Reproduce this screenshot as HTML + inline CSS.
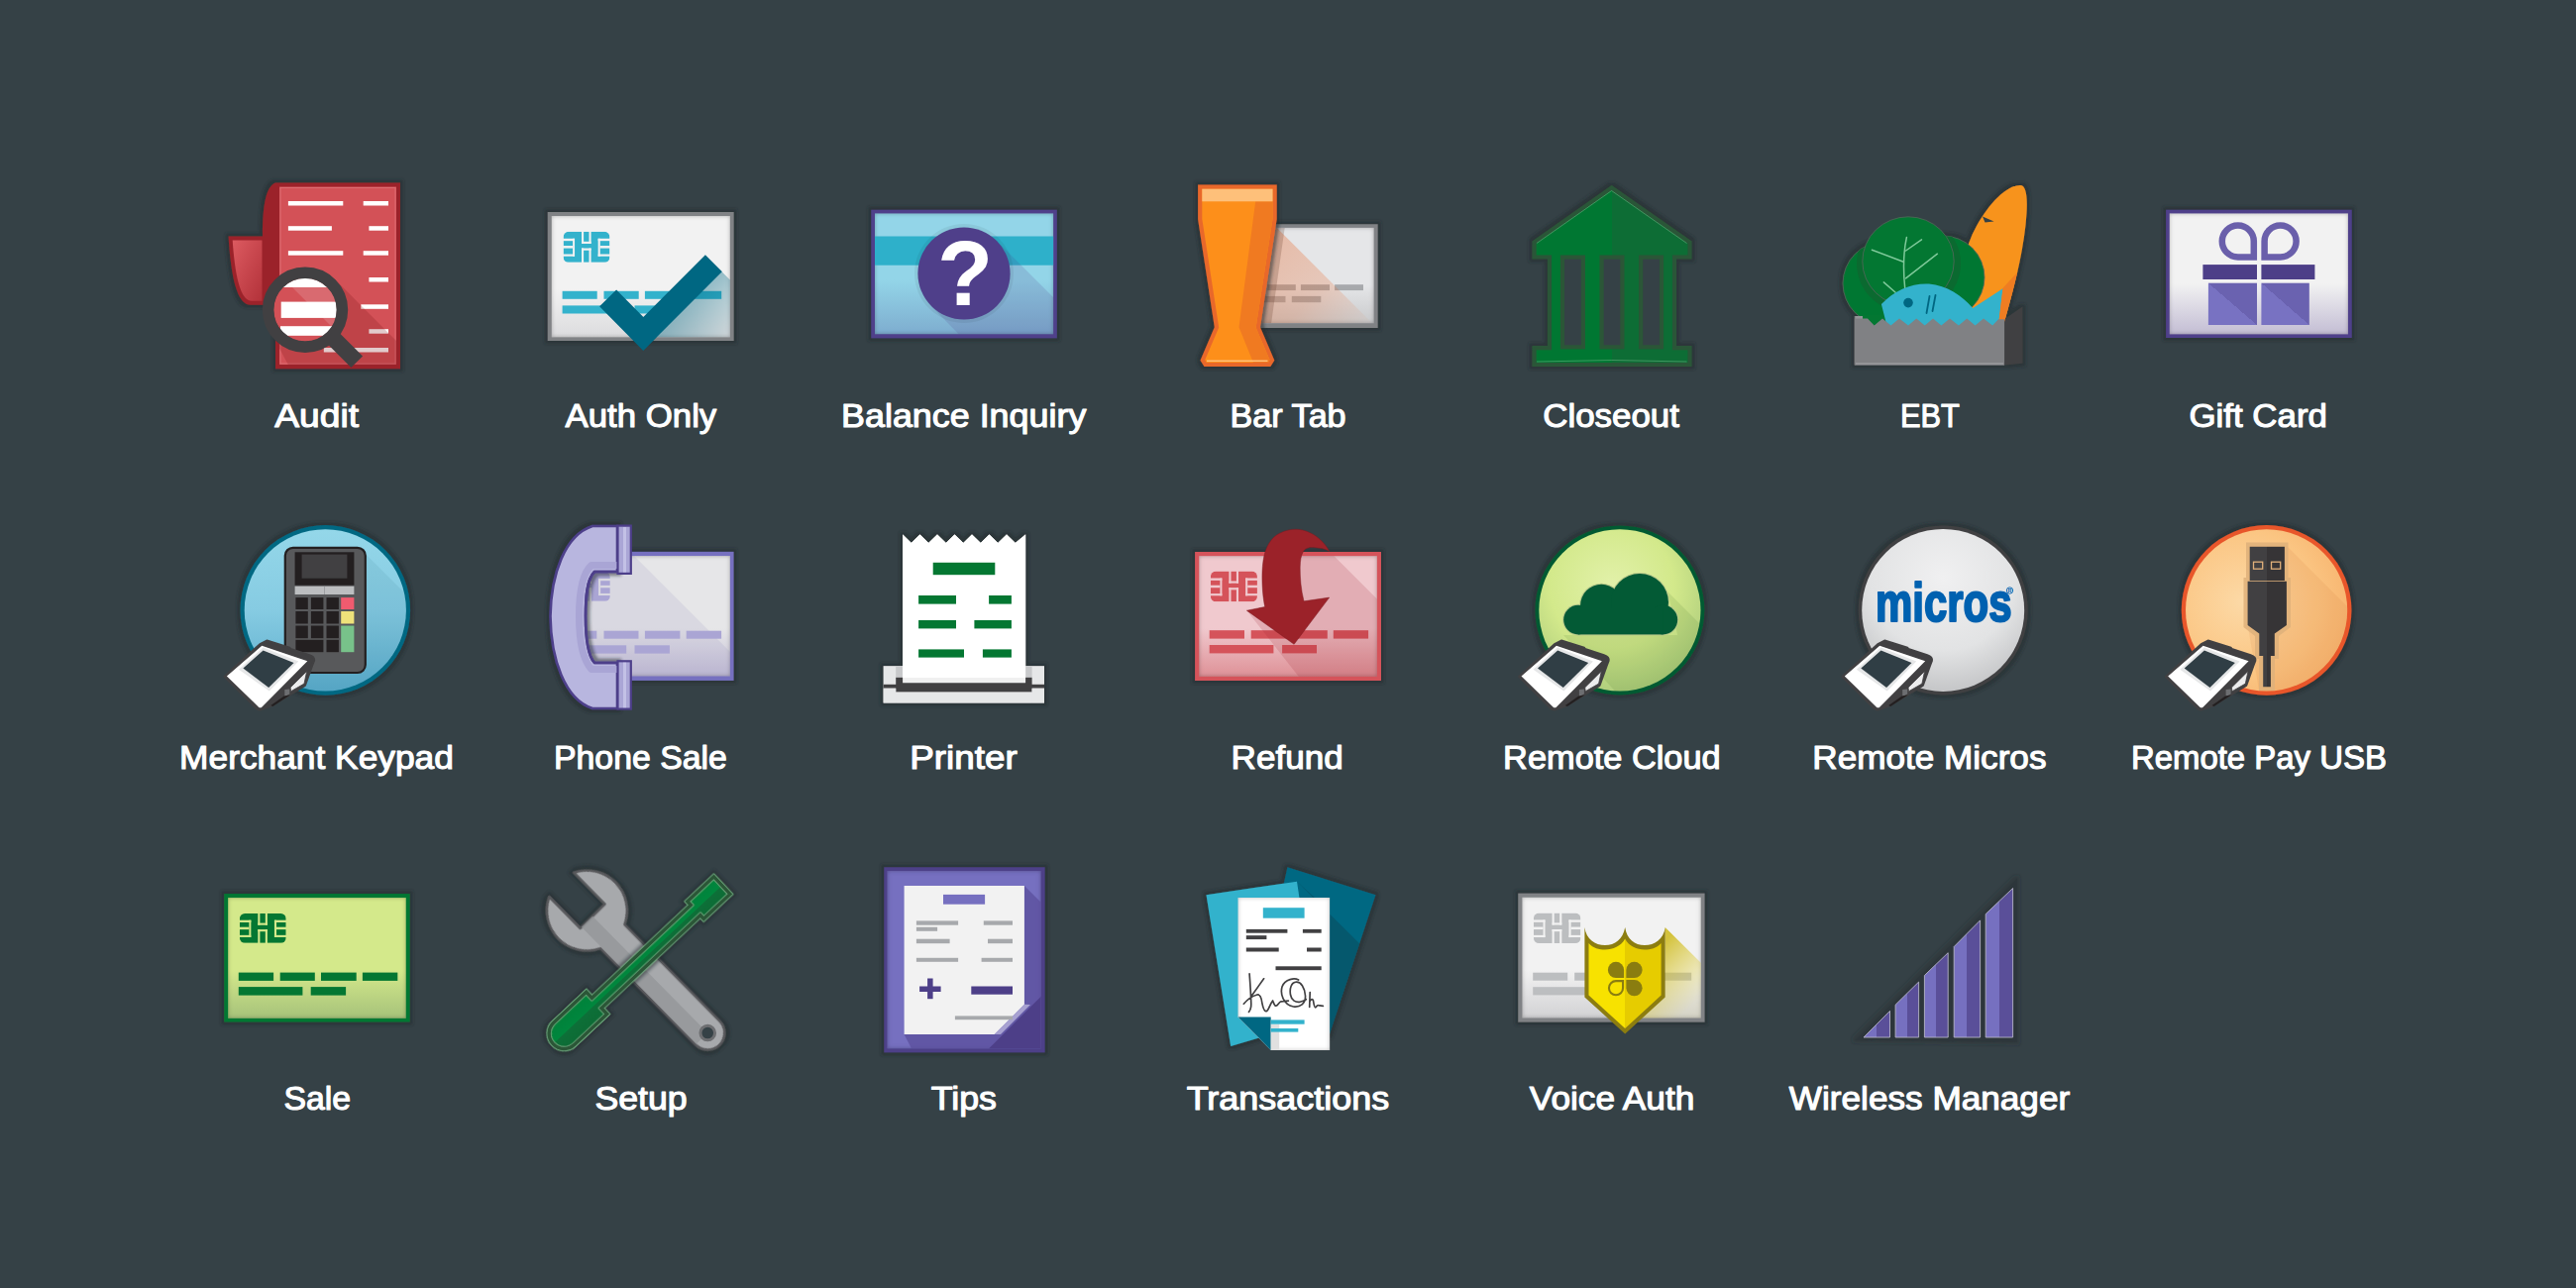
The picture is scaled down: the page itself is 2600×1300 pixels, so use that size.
<!DOCTYPE html>
<html><head><meta charset="utf-8">
<style>
html,body{margin:0;padding:0;background:#354146;width:2600px;height:1300px;overflow:hidden}
svg{position:absolute;left:0;top:0;display:block}
</style></head><body>
<svg width="2600" height="1300" viewBox="0 0 2600 1300">
<defs>
<filter id="halo" x="-30%" y="-30%" width="160%" height="160%">
  <feMorphology in="SourceAlpha" operator="dilate" radius="3" result="d"/>
  <feGaussianBlur in="d" stdDeviation="1.8" result="b"/>
  <feFlood flood-color="#20292c" flood-opacity="0.5"/>
  <feComposite in2="b" operator="in" result="s"/>
  <feMerge><feMergeNode in="s"/><feMergeNode in="SourceGraphic"/></feMerge>
</filter>
<filter id="inset" x="-10%" y="-10%" width="120%" height="120%">
  <feFlood flood-color="#000" flood-opacity="0.55" result="f"/>
  <feComposite in="f" in2="SourceAlpha" operator="out" result="o"/>
  <feGaussianBlur in="o" stdDeviation="2.2" result="b"/>
  <feComposite in="b" in2="SourceAlpha" operator="in" result="i"/>
  <feMerge><feMergeNode in="SourceGraphic"/><feMergeNode in="i"/></feMerge>
</filter>
<mask id="chipm" maskContentUnits="userSpaceOnUse" x="-2" y="-2" width="51" height="34">
  <rect x="0" y="0" width="46.8" height="29.8" rx="5.2" fill="#fff"/>
  <g fill="#000">
    <rect x="18.4" y="-1" width="2.1" height="12.7"/><rect x="25.9" y="-1" width="2.1" height="12.7"/><rect x="18.4" y="9.6" width="9.6" height="2.1"/>
    <rect x="18.4" y="16.1" width="2.1" height="14.7"/><rect x="25.9" y="16.1" width="2.1" height="14.7"/><rect x="18.4" y="16.1" width="9.6" height="2.1"/>
    <rect x="9.5" y="6.7" width="1.95" height="17.3"/><rect x="-1" y="6.7" width="12.4" height="2.3"/><rect x="-1" y="21.85" width="12.4" height="2.1"/><rect x="-1" y="13.7" width="10.5" height="2.45"/>
    <rect x="35.05" y="6.7" width="2.1" height="17.3"/><rect x="35.05" y="6.7" width="13" height="2.3"/><rect x="35.05" y="21.85" width="13" height="2.1"/><rect x="37.1" y="13.7" width="11" height="2.45"/>
  </g>
</mask>
<g id="reader">
  <path d="M-101.5,67 L-65.8,34.4 L-59,30.9 L-36,38.1 L-35.1,39.3 L-16.1,45.5 C-13,46.5 -11,48.5 -11.5,51 L-13.6,56.4 L-20.5,75.7 L-54.6,96.5 L-65.2,100.2 C-67,100.8 -68.5,100 -69.5,99 Z" fill="#414042" stroke="#414042" stroke-width="2.5" stroke-linejoin="round"/>
  <path d="M-35.2,78 L-18.6,61.5 L-21.3,74.2 L-34.6,81.8 Z" fill="#ececed" stroke="#414042" stroke-width="0.8"/>
  <path d="M-41,80 L-36,79.5 L-36,84.5 L-41,87 Z" fill="#6d6e71"/>
  <path d="M-55,96 L-41.5,86.5 L-35.5,85.5 L-53,97 Z" fill="#231f20"/>
  <path d="M-99.4,66.6 L-64,35.9 L-18,51.4 L-63.8,97.5 C-64.8,98.6 -66.2,98.8 -67.2,97.8 Z" fill="#fff"/>
  <path d="M-87.3,59.8 L-62.7,37.5 L-27,51.7 L-56.5,81.6 Z" fill="#e6e7e8"/>
  <path d="M-82.9,58.6 L-62.7,40.6 L-31.7,53 L-57.1,78.1 Z" fill="#303e45"/>
</g>
</defs>
<!-- 01_audit.svg -->
<g id="audit">
<defs>
<linearGradient id="au_tab" x1="0" y1="0" x2="1" y2="1"><stop offset="0" stop-color="#dc5a60"/><stop offset="1" stop-color="#b3323a"/></linearGradient>
<clipPath id="au_clip"><rect x="282" y="188.5" width="118" height="179.5"/></clipPath>
<clipPath id="au_lens"><circle cx="308" cy="312.7" r="32"/></clipPath>
</defs>
<g filter="url(#halo)">
<path d="M230.6,238.6 L266,238.6 L266,307.8 L253,307.8 C241,307.8 233.5,287 230.6,238.6 Z" fill="#9b2229"/>
<path d="M278,184.5 L404,184.5 L404,372.2 L278,372.2 L278,307.8 L265,307.8 L265,238 C265,205 269,188 278,184.5 Z" fill="#9b2229"/>
</g>
<path d="M234.7,242.6 L264.5,242.6 L264.5,303.8 L254,303.8 C244,303.8 237.5,284 234.7,242.6 Z" fill="url(#au_tab)"/>
<rect x="282" y="188.5" width="118" height="179.5" fill="#d35157"/>
<rect x="283" y="189.5" width="116" height="177.5" fill="none" stroke="#e88a8e" stroke-opacity="0.5" stroke-width="1"/>
<g fill="#fff">
<rect x="290.9" y="203" width="55.4" height="4.5"/><rect x="366.7" y="203" width="25.3" height="4.5"/>
<rect x="290.9" y="228.2" width="44" height="4.5"/><rect x="372.4" y="228.2" width="19.6" height="4.5"/>
<rect x="290.9" y="253.2" width="55.4" height="4.5"/><rect x="366.7" y="253.2" width="25.3" height="4.5"/>
<rect x="372.4" y="280" width="19.6" height="4.5"/>
<rect x="364.3" y="307.3" width="27.7" height="4.5"/>
<rect x="372.4" y="332.2" width="19.6" height="4.5"/>
<rect x="326.8" y="351" width="65.2" height="4.5"/>
</g>
<g clip-path="url(#au_clip)">
<path d="M338.4,282.3 L420,363.9 L420,390 L302.5,390 L277.6,343.1 Z" fill="#7a1015" fill-opacity="0.22"/>
</g>
<g clip-path="url(#au_lens)">
<rect x="270" y="275" width="80" height="80" fill="#d35157"/>
<rect x="270" y="275" width="80" height="15" fill="#fff"/>
<rect x="283.7" y="304.6" width="70" height="16.3" fill="#fff"/>
<rect x="283" y="329.2" width="70" height="9.6" fill="#fff"/>
<path d="M295,290 L355,290 L355,350 Z" fill="#fff" fill-opacity="0.15"/>
</g>
<circle cx="308" cy="312.7" r="37.4" fill="none" stroke="#414042" stroke-width="11.6"/>
<line x1="333" y1="338" x2="360.2" y2="365.3" stroke="#414042" stroke-width="16.5"/>
</g>

<!-- 02_auth.svg -->
<g id="auth">
<defs>
<linearGradient id="ao_card" x1="0" y1="0" x2="0" y2="1"><stop offset="0.6" stop-color="#f2f2f2"/><stop offset="1" stop-color="#dcdcde"/></linearGradient>
<linearGradient id="ao_sh" gradientUnits="userSpaceOnUse" x1="690" y1="300" x2="740" y2="350"><stop offset="0" stop-color="#006782" stop-opacity="0.45"/><stop offset="1" stop-color="#006782" stop-opacity="0"/></linearGradient>
</defs>
<rect x="552.8" y="214" width="187.8" height="130" fill="#808285" filter="url(#halo)"/>
<rect x="556.8" y="218" width="180" height="122.3" fill="url(#ao_card)" filter="url(#inset)"/>
<g transform="translate(568.6,233.8) scale(1.0,1.04)"><rect x="0" y="0" width="46.8" height="29.8" fill="#33b2cc" mask="url(#chipm)"/></g>
<g fill="#33b2cc">
<rect x="567.6" y="293.8" width="35.1" height="8"/><rect x="609.5" y="293.8" width="35.2" height="8"/><rect x="650.9" y="293.8" width="35.5" height="8"/><rect x="692.7" y="293.8" width="35.5" height="8"/>
<rect x="567.6" y="308.4" width="64.6" height="8.1"/><rect x="640.5" y="308.4" width="35.5" height="8.1"/>
</g>
<path d="M728.8,274.5 L736.8,282.5 L736.8,340.3 L663,340.3 Z" fill="url(#ao_sh)"/>
<polyline points="613.6,300.9 649.3,336.9 720.4,265.8" fill="none" stroke="#006782" stroke-width="24" stroke-linejoin="miter" stroke-miterlimit="10"/>
</g>

<!-- 03_balance.svg -->
<g id="balance">
<defs>
<linearGradient id="bi_card" x1="0" y1="0" x2="0" y2="1"><stop offset="0.55" stop-color="#93d5e8"/><stop offset="1" stop-color="#7eadcf"/></linearGradient>
<clipPath id="bi_clip"><rect x="883" y="215.5" width="180.1" height="121.7"/></clipPath>
</defs>
<rect x="879.3" y="211.8" width="187.5" height="129.5" fill="#4f3f8a" filter="url(#halo)"/>
<rect x="883" y="215.5" width="180.1" height="121.7" fill="url(#bi_card)" filter="url(#inset)"/>
<rect x="883" y="238.5" width="180.1" height="29.2" fill="#2eb0ca"/>
<g clip-path="url(#bi_clip)">
<path d="M1006,243 L1100,337 L1100,360 L990,360 L940,309 Z" fill="#4f3f8a" fill-opacity="0.16"/>
</g>
<circle cx="973" cy="276" r="50" fill="#000" fill-opacity="0.06"/>
<circle cx="973" cy="276" r="46.6" fill="#4f3f8a"/>
<text x="974" y="308.3" font-family="Liberation Sans" font-weight="bold" font-size="92" fill="#fff" text-anchor="middle">?</text>
</g>

<!-- 04_bartab.svg -->
<g id="bartab">
<defs>
<linearGradient id="bt_card" x1="0" y1="0" x2="0" y2="1"><stop offset="0.6" stop-color="#e5e6e8"/><stop offset="1" stop-color="#c9cacc"/></linearGradient>
<linearGradient id="bt_sh" gradientUnits="userSpaceOnUse" x1="1290" y1="230" x2="1385" y2="326"><stop offset="0" stop-color="#e8672a" stop-opacity="0.34"/><stop offset="0.55" stop-color="#e8672a" stop-opacity="0.24"/><stop offset="1" stop-color="#e8672a" stop-opacity="0.02"/></linearGradient>
<clipPath id="bt_clip"><rect x="1266" y="229.9" width="120.6" height="96.3"/></clipPath>
</defs>
<rect x="1262" y="226.3" width="128.6" height="104.7" fill="#808285" filter="url(#halo)"/>
<rect x="1266" y="229.9" width="120.6" height="96.3" fill="url(#bt_card)" filter="url(#inset)"/>
<g fill="#a7a9ac">
<rect x="1279.2" y="287.2" width="28.6" height="5.9"/><rect x="1312.9" y="287.2" width="29.1" height="5.9"/><rect x="1347.1" y="287.2" width="28.9" height="5.9"/>
<rect x="1276" y="298.9" width="21.5" height="6.3"/><rect x="1303.8" y="298.9" width="29.5" height="6.3"/>
</g>
<g clip-path="url(#bt_clip)">
<path d="M1288.7,229.9 L1385,326.2 L1260,326.2 L1260,229.9 Z" fill="url(#bt_sh)"/>
<path d="M1280,229.9 L1296.7,229.9 L1283.1,326.2 L1268,326.2 Z" fill="#5a3020" fill-opacity="0.22"/>
</g>
<g filter="url(#halo)">
<path d="M1209.1,186.5 L1288.7,186.5 L1288.7,221.2 L1272,330.2 L1286.3,363.7 L1282.3,370 L1215.5,370 L1211.5,363.7 L1225.8,330.2 L1209.1,221.2 Z" fill="#e8672a"/>
</g>
<path d="M1213.3,190.7 L1284.5,190.7 L1284.5,221 L1267.6,330.6 L1281.6,363.3 L1280,366 L1217.8,366 L1216.2,363.3 L1230.2,330.6 L1213.3,221 Z" fill="#fd8f1a"/>
<path d="M1267.2,203.3 L1284.5,203.3 L1284.5,221 L1267.6,330.6 L1281.6,363.3 L1280,366 L1265,366 L1250.5,330.2 Z" fill="#f07a21"/>
<rect x="1213.3" y="190.7" width="71.2" height="12.6" fill="#fec07a"/>
<line x1="1218" y1="364.3" x2="1279.5" y2="364.3" stroke="#fec07a" stroke-width="1.5"/>
</g>

<!-- 05_closeout.svg -->
<g id="closeout">
<defs>
<linearGradient id="co_fill" x1="0" y1="0" x2="1" y2="0"><stop offset="0.5" stop-color="#037732"/><stop offset="0.5" stop-color="#0f6d35"/></linearGradient>
</defs>
<g filter="url(#halo)">
<path d="M1626.6,189.5 L1705.5,244.5 L1705.5,259.5 L1690,259.5 L1690,351.2 L1705.5,351.2 L1705.5,368 L1548.5,368 L1548.5,351.2 L1564,351.2 L1564,259.5 L1548.5,259.5 L1548.5,244.5 Z" fill="url(#co_fill)" stroke="#2b5637" stroke-width="4.2" stroke-linejoin="miter"/>
</g>
<g fill="#354146" stroke="#2b5637" stroke-width="4.2">
<rect x="1577" y="259.6" width="20.9" height="90.7"/>
<rect x="1616.6" y="259.6" width="20.8" height="90.7"/>
<rect x="1656.2" y="259.6" width="20.8" height="90.7"/>
</g>
<g fill="none" stroke="#6fb585" stroke-opacity="0.55" stroke-width="1">
<polyline points="1551,245.5 1626.6,192.5 1702.5,245.5"/>
<path d="M1551,365 Q1626.6,362 1702.5,365"/>
</g>
</g>

<!-- 06_ebt.svg -->
<g id="ebt">
<defs>
<clipPath id="ebt_lc"><circle cx="1902" cy="286" r="42"/></clipPath>
<clipPath id="ebt_rc"><circle cx="1961" cy="280" r="42"/></clipPath>
<clipPath id="ebt_bc"><path d="M2039,187 C2045,187 2046.5,198 2045.5,215 C2043.5,250 2033,290 2023,325 L1985,325 C1975,290 1980,255 1995,228 C2008,205 2025,187 2039,187 Z"/></clipPath>
</defs>
<g filter="url(#halo)">
<path d="M2039,187 C2045,187 2046.5,198 2045.5,215 C2043.5,250 2033,290 2023,325 L1985,325 C1975,290 1980,255 1995,228 C2008,205 2025,187 2039,187 Z" fill="#f7931e"/>
<circle cx="1902" cy="286" r="42" fill="#037732" stroke="#55655a" stroke-width="0.8"/>
<circle cx="1961" cy="280" r="42" fill="#037732" stroke="#55655a" stroke-width="0.8"/>
<rect x="1871.8" y="319" width="151.3" height="49.4" fill="#808184"/>
<path d="M2023.1,322.3 L2041.4,309.5 L2041.4,366.8 L2023.1,368.4 Z" fill="#414042"/>
</g>
<rect x="1872.8" y="319" width="150" height="3" fill="#949598"/>
<g clip-path="url(#ebt_bc)"><path d="M2013,300 L2050,260 L2050,330 L2000,330 Z" fill="#ef7d22"/></g>
<path d="M2001,218.5 L2012.5,223.5 L2003.5,224.5 Z" fill="#354146"/>
<g clip-path="url(#ebt_lc)"><ellipse cx="1926" cy="266" rx="52" ry="50" fill="#0b6a30"/></g>
<g clip-path="url(#ebt_rc)"><ellipse cx="1926" cy="266" rx="53" ry="50" fill="#0b6a30"/></g>
<rect x="1880" y="318" width="30" height="12" fill="#037732"/>
<ellipse cx="1926" cy="263.8" rx="46.2" ry="45" fill="#037732" stroke="#55655a" stroke-width="0.8"/>
<g stroke="#7fc99a" stroke-width="1.5" fill="none" stroke-linecap="round">
<path d="M1924.4,239.5 C1921,255 1921,275 1922.8,292"/>
<line x1="1923.6" y1="253" x2="1939.5" y2="241.9"/>
<line x1="1921.2" y1="264.2" x2="1889.4" y2="252.2"/>
<line x1="1923.6" y1="280.9" x2="1955.4" y2="256.2"/>
<line x1="1913.2" y1="295.2" x2="1901.3" y2="284.9"/>
</g>
<path d="M1898.9,307.1 C1912,293 1930,285.5 1947,286.5 C1965,288 1980,298 1991.2,311.1 L2021.5,291.2 L2016.7,331 L1905,331 Z" fill="#33b2cc"/>
<path d="M2021.5,291.2 L2024,295 L2019.5,331 L2016.7,331 Z" fill="#ef7d22"/>
<circle cx="1926" cy="305.6" r="4.8" fill="#006782"/>
<g stroke="#006782" stroke-width="1.8" stroke-linecap="round"><line x1="1947.5" y1="299" x2="1944.5" y2="316"/><line x1="1953.5" y1="298" x2="1950.5" y2="314"/></g>
<path d="M1871.8,321.5 L1885,321.5 L1891.7,328.6 L1900,321.5 L1908.5,328.6 L1917,321.5 L1926,328.6 L1934.3,321.5 L1942.7,328.6 L1951,321.5 L1959.4,328.6 L1968,321.5 L1976.9,328.6 L1985.2,321.5 L1993.6,328.6 L2002,321.5 L2011.1,328.6 L2017,322.3 L2023.1,322.3 L2023.1,368.4 L1871.8,368.4 Z" fill="#808184"/>
<line x1="1873" y1="367" x2="2022" y2="367" stroke="#a7a9ac" stroke-width="1"/>
</g>

<!-- 07_gift.svg -->
<g id="gift">
<defs>
<linearGradient id="gc_card" x1="0" y1="0" x2="0" y2="1"><stop offset="0.58" stop-color="#f2f2f2"/><stop offset="1" stop-color="#c3bdd4"/></linearGradient>
<linearGradient id="gc_box" x1="0" y1="1" x2="1" y2="0"><stop offset="0.5" stop-color="#7872c2"/><stop offset="0.5" stop-color="#6a62b0"/></linearGradient>
</defs>
<rect x="2186.1" y="211.8" width="187.6" height="129.2" fill="#4f3f8a" filter="url(#halo)"/>
<rect x="2189.8" y="215.5" width="180.1" height="121.8" fill="url(#gc_card)" filter="url(#inset)"/>
<g fill="none" stroke="#6a5fab" stroke-width="6.5">
<path d="M2274.8,243.5 L2274.8,259.5 L2258.8,259.5 A16,16 0 1 1 2274.8,243.5 Z"/>
<path d="M2285.6,243.5 L2285.6,259.5 L2301.6,259.5 A16,16 0 1 0 2285.6,243.5 Z"/>
</g>
<g fill="#4d3f88"><rect x="2223.4" y="267.1" width="54.6" height="14.9"/><rect x="2282.4" y="267.1" width="54" height="14.9"/></g>
<rect x="2228.9" y="285.7" width="49.1" height="42.3" fill="url(#gc_box)"/>
<rect x="2282.4" y="285.7" width="48.4" height="42.3" fill="url(#gc_box)"/>
</g>

<!-- 08_keypad.svg -->
<g id="keypad">
<defs>
<linearGradient id="mk_bg" x1="0" y1="0" x2="0" y2="1"><stop offset="0" stop-color="#94d7e9"/><stop offset="0.5" stop-color="#86cbe2"/><stop offset="1" stop-color="#5cadcc"/></linearGradient>
<clipPath id="mk_clip"><circle cx="328.3" cy="615.9" r="81.5"/></clipPath>
</defs>
<circle cx="328.3" cy="615.9" r="85.8" fill="#006782" filter="url(#halo)"/>
<circle cx="328.3" cy="615.9" r="81.6" fill="url(#mk_bg)"/>
<g clip-path="url(#mk_clip)"><path d="M369.8,560 L450,640 L450,720 L320,720 L286.8,680 Z" fill="#004a6a" fill-opacity="0.07"/></g>
<rect x="287.8" y="552.8" width="81" height="126.2" rx="8" fill="#58595b" stroke="#231f20" stroke-width="2.2"/>
<rect x="297.6" y="557.3" width="59.8" height="33.4" fill="#231f20"/>
<rect x="304.6" y="559.6" width="45.8" height="24.1" fill="#414042"/>
<rect x="297.6" y="591.7" width="59.8" height="8.3" fill="#bcbec0"/>
<line x1="327.5" y1="591.7" x2="327.5" y2="600" stroke="#8a8c8e" stroke-width="0.6"/>
<g fill="#231f20">
<rect x="298.4" y="603.1" width="12.4" height="11.9"/><rect x="313.9" y="603.1" width="12.5" height="11.9"/><rect x="329.5" y="603.1" width="12.4" height="11.9"/>
<rect x="298.4" y="617" width="12.4" height="12.5"/><rect x="313.9" y="617" width="12.5" height="12.5"/><rect x="329.5" y="617" width="12.4" height="12.5"/>
<rect x="298.4" y="631.5" width="12.4" height="12.7"/><rect x="313.9" y="631.5" width="12.5" height="12.7"/><rect x="329.5" y="631.5" width="12.4" height="12.7"/>
<rect x="298.4" y="645.8" width="28" height="12.4"/><rect x="329.5" y="645.8" width="12.4" height="12.4"/>
</g>
<rect x="344.2" y="603.1" width="13.2" height="11.9" fill="#f05b6f"/>
<rect x="344.2" y="617" width="13.2" height="12.5" fill="#eee27a"/>
<rect x="344.2" y="631.5" width="13.2" height="26.7" fill="#78c28a"/>
<use href="#reader" transform="translate(328.3,615.9)"/>
</g>

<!-- 09_phone.svg -->
<g id="phone">
<defs>
<linearGradient id="ps_card" x1="0" y1="0" x2="0" y2="1"><stop offset="0.6" stop-color="#e6e6e8"/><stop offset="1" stop-color="#c4bfd6"/></linearGradient>
<clipPath id="ps_clip"><rect x="590" y="561.1" width="146.8" height="121.3"/></clipPath>
</defs>
<rect x="600" y="556.9" width="140.5" height="130" fill="#7670c0" filter="url(#halo)"/>
<rect x="590" y="561.1" width="146.8" height="121.3" fill="url(#ps_card)" filter="url(#inset)"/>
<g clip-path="url(#ps_clip)">
<path d="M590,561.1 L640,561.1 L761.3,682.4 L590,682.4 Z" fill="#6a5fab" fill-opacity="0.1"/>
</g>
<g transform="translate(569,577.3) scale(1,0.99)"><rect x="0" y="0" width="46.8" height="29.8" fill="#aaa5d4" mask="url(#chipm)"/></g>
<g fill="#aaa5d4">
<rect x="592.8" y="636.7" width="9.5" height="8"/><rect x="609.5" y="636.7" width="35" height="8"/><rect x="650.9" y="636.7" width="35.5" height="8"/><rect x="692.7" y="636.7" width="35.4" height="8"/>
<rect x="592.8" y="651.3" width="39.4" height="8.3"/><rect x="640.5" y="651.3" width="35.4" height="8.3"/>
</g>
<g filter="url(#halo)">
<path d="M623,531 L598,531 C570,540 556,580 555.5,622 C556,665 570,706 598,715 L623,715 L623,669 L600,669 C592,660 591,640 591,622 C591,604 592,585 600,577 L623,577 Z" fill="#b8b6df" stroke="#4d3f8a" stroke-width="2.6" stroke-linejoin="round"/>
</g>
<path d="M623,570.5 L597,570.5 C586,580 584.5,604 584.5,622 C584.5,640 586,664 597,675.5 L623,675.5" fill="none" stroke="#a9a5d5" stroke-width="7" stroke-linejoin="round"/>
<path d="M623,577 L600,577 C592,585 591,604 591,622 C591,640 592,660 600,669 L623,669" fill="none" stroke="#4d3f8a" stroke-width="2.6"/>
<g fill="#aaa6d6" stroke="#4d3f8a" stroke-width="2.2">
<rect x="623.5" y="530.6" width="13.3" height="48.3"/>
<rect x="623.5" y="667.3" width="13.3" height="48.3"/>
</g>
<g fill="#c3c1e6"><rect x="629" y="532" width="3" height="45.5"/><rect x="629" y="668.7" width="3" height="45.5"/></g>
</g>

<!-- 10_printer.svg -->
<g id="printer">
<g filter="url(#halo)">
<rect x="891.7" y="672.2" width="162.3" height="37.2" fill="#e6e7e8"/>
<path d="M911.1,539.4 L919.8,548 L928.5,539.4 L937.2,548 L946,539.4 L954.8,548 L963.5,539.4 L972.3,548 L981,539.4 L989.8,548 L998.5,539.4 L1007.2,548 L1016,539.4 L1024.8,548 L1035.1,539.4 L1035.1,689.3 L911.1,689.3 Z" fill="#fff"/>
</g>
<rect x="904.2" y="672.2" width="7" height="11.6" fill="#c8c9cb"/>
<rect x="1035.1" y="672.2" width="6.5" height="11.6" fill="#c8c9cb"/>
<rect x="904.2" y="683.8" width="137.4" height="14.8" fill="#414042"/>
<rect x="891.7" y="690.8" width="162.3" height="3.9" fill="#414042"/>
<rect x="891.7" y="694.7" width="12.5" height="14.7" fill="#e6e7e8"/>
<rect x="1041.6" y="694.7" width="12.4" height="14.7" fill="#e6e7e8"/>
<rect x="904.2" y="698.6" width="137.4" height="10.8" fill="#e6e7e8"/>
<path d="M911.1,539.4 L919.8,548 L928.5,539.4 L937.2,548 L946,539.4 L954.8,548 L963.5,539.4 L972.3,548 L981,539.4 L989.8,548 L998.5,539.4 L1007.2,548 L1016,539.4 L1024.8,548 L1035.1,539.4 L1035.1,689.3 L911.1,689.3 Z" fill="#fff"/>
<rect x="911.1" y="684" width="124" height="5.3" fill="#000" fill-opacity="0.06"/>
<g fill="#047732">
<rect x="941.7" y="567.8" width="62.6" height="12.4"/>
<rect x="927.1" y="601" width="37.9" height="8.6"/><rect x="998.1" y="601" width="22.8" height="8.6"/>
<rect x="927.1" y="626" width="37.9" height="8.4"/><rect x="983.4" y="626" width="37.5" height="8.4"/>
<rect x="927.1" y="655.4" width="45.9" height="8.2"/><rect x="991.9" y="655.4" width="29" height="8.2"/>
</g>
</g>

<!-- 11_refund.svg -->
<g id="refund">
<defs>
<linearGradient id="rf_card" x1="0" y1="0" x2="0" y2="1"><stop offset="0.6" stop-color="#f0c9ce"/><stop offset="1" stop-color="#de9197"/></linearGradient>
<clipPath id="rf_clip"><rect x="1210.3" y="561.2" width="179.5" height="121.6"/></clipPath>
</defs>
<rect x="1206.1" y="557" width="187.9" height="130" fill="#d5535a" filter="url(#halo)"/>
<rect x="1210.3" y="561.2" width="179.5" height="121.6" fill="url(#rf_card)" filter="url(#inset)"/>
<g transform="translate(1221.9,576.6) scale(1.005,1.03)"><rect x="0" y="0" width="46.8" height="29.8" fill="#d5535a" mask="url(#chipm)"/></g>
<g fill="#d5535a">
<rect x="1220.7" y="636.2" width="35.3" height="8.4"/><rect x="1262.7" y="636.2" width="77.1" height="8.4"/><rect x="1345.8" y="636.2" width="35.3" height="8.4"/>
<rect x="1220.7" y="651" width="64.7" height="8.4"/><rect x="1294.1" y="651" width="34.9" height="8.4"/>
</g>
<g clip-path="url(#rf_clip)">
<path d="M1341.7,556.4 L1441.7,656.4 L1441.7,720 L1340,720 L1258.4,616.2 L1276.7,612.5 L1275,566 L1292,538 L1308.7,534.2 L1334,546 Z" fill="#9b2229" fill-opacity="0.16"/>
</g>
<g>
<path d="M1258.4,616.2 L1276.7,612.5 C1274,600 1273,580 1275,566 C1277,552 1283,542 1292,538 C1298,535 1303,534 1308.7,534.2 C1318,534.5 1327,539 1334,546 C1337,549 1340,553 1341.7,556.4 C1338,554.5 1335,553.5 1331.8,553.3 C1327,552.6 1323,552.4 1321.3,552.8 C1318,553.5 1316,555 1315,557.5 C1313,561 1312.4,566 1312.2,572 C1312,582 1313,595 1316,606.8 L1341.7,603.1 L1306.1,650.3 Z" fill="#9b2229" stroke="#7d1a20" stroke-width="0.8" stroke-opacity="0.6"/>
</g>
</g>

<!-- 12_cloud.svg -->
<g id="cloud">
<defs>
<radialGradient id="rc_bg" cx="0.45" cy="0.35" r="0.7"><stop offset="0" stop-color="#e2f1aa"/><stop offset="0.55" stop-color="#d3e98b"/><stop offset="1" stop-color="#a9c97a"/></radialGradient>
<clipPath id="rc_clip"><circle cx="1634.9" cy="615.9" r="81.5"/></clipPath>
</defs>
<circle cx="1634.9" cy="615.9" r="85.5" fill="#045a32" filter="url(#halo)"/>
<circle cx="1634.9" cy="615.9" r="81.6" fill="url(#rc_bg)"/>
<g clip-path="url(#rc_clip)"><path d="M1683,597 L1760,674 L1760,730 L1660,730 L1578,641 L1693.2,641 Z" fill="#3a6a20" fill-opacity="0.12"/></g>
<g fill="#b9c98a"><circle cx="1593" cy="625.6" r="15.8"/><circle cx="1616.3" cy="611" r="22.2"/><circle cx="1655" cy="608" r="30"/><circle cx="1678.4" cy="625.6" r="15.8"/><rect x="1593" y="613" width="85.4" height="28.4"/></g>
<g fill="#035a35"><circle cx="1593" cy="625.6" r="14.8"/><circle cx="1616.3" cy="611" r="21.2"/><circle cx="1655" cy="608" r="29"/><circle cx="1678.4" cy="625.6" r="14.8"/><rect x="1593" y="614" width="85.4" height="26.4"/></g>
<use href="#reader" transform="translate(1634.9,615.9)"/>
</g>

<!-- 13_micros.svg -->
<g id="micros">
<defs>
<radialGradient id="rm_bg" cx="0.5" cy="0.3" r="0.75"><stop offset="0" stop-color="#f0f0f1"/><stop offset="0.6" stop-color="#e2e3e4"/><stop offset="1" stop-color="#bfc0c2"/></radialGradient>
</defs>
<circle cx="1961.2" cy="615.9" r="85.5" fill="#414042" filter="url(#halo)"/>
<circle cx="1961.2" cy="615.9" r="82" fill="url(#rm_bg)"/>
<text x="1893" y="627" font-family="Liberation Sans" font-weight="bold" font-size="55" fill="#0061b0" stroke="#0061b0" stroke-width="2.2" stroke-linejoin="round" textLength="137.5" lengthAdjust="spacingAndGlyphs">micros</text>
<circle cx="2028.5" cy="596" r="3.2" fill="none" stroke="#0061b0" stroke-width="0.9"/><text x="2028.5" y="598.3" font-family="Liberation Sans" font-weight="bold" font-size="5.5" fill="#0061b0" text-anchor="middle">R</text>
<use href="#reader" transform="translate(1961.2,615.9)"/>
</g>

<!-- 14_usb.svg -->
<g id="usb">
<defs>
<radialGradient id="ru_bg" cx="0.35" cy="0.45" r="0.75"><stop offset="0" stop-color="#fcd9a6"/><stop offset="0.6" stop-color="#fbc582"/><stop offset="1" stop-color="#f6b06a"/></radialGradient>
<clipPath id="ru_clip"><circle cx="2287.6" cy="615.9" r="81.5"/></clipPath>
<linearGradient id="ru_plug" x1="0" y1="0" x2="1" y2="0"><stop offset="0.5" stop-color="#414042"/><stop offset="0.5" stop-color="#363436"/></linearGradient>
</defs>
<circle cx="2287.6" cy="615.9" r="85.8" fill="#e8572a" filter="url(#halo)"/>
<circle cx="2287.6" cy="615.9" r="81.6" fill="url(#ru_bg)"/>
<g clip-path="url(#ru_clip)"><path d="M2308,551 L2390,633 L2390,720 L2284.2,720 L2268.6,631 L2268.6,551 Z" fill="#c0602a" fill-opacity="0.1"/></g>
<path d="M2267,547.5 L2309.5,547.5 L2309.5,583 L2312,583 L2312,633 L2300,642 L2300,665 L2296,665 L2296,697 L2280,697 L2280,665 L2276,665 L2276,642 L2264.5,633 L2264.5,583 L2267,583 Z" fill="#deb07a" fill-opacity="0.85"/>
<rect x="2270.7" y="551.8" width="35.2" height="34.2" fill="url(#ru_plug)"/>
<path d="M2268.6,586.8 L2307.9,586.8 L2307.9,631 L2295.8,639.6 L2295.8,662.1 L2291.9,662.1 L2291.9,693.2 L2284.2,693.2 L2284.2,662.1 L2280.3,662.1 L2280.3,639.6 L2268.6,631 Z" fill="url(#ru_plug)"/>
<g fill="none" stroke="#e0b07a" stroke-width="1.3"><rect x="2274.5" y="567.2" width="9.2" height="7"/><rect x="2292.5" y="567.2" width="9.2" height="7"/></g>
<use href="#reader" transform="translate(2287.6,615.9)"/>
</g>

<!-- 15_sale.svg -->
<g id="sale">
<defs>
<linearGradient id="sa_card" x1="0" y1="0" x2="0" y2="1"><stop offset="0.6" stop-color="#d4e98b"/><stop offset="1" stop-color="#a6c27a"/></linearGradient>
</defs>
<rect x="226.2" y="902.1" width="187.5" height="129.4" fill="#037732" filter="url(#halo)"/>
<rect x="230.2" y="906.1" width="179.5" height="121.7" fill="url(#sa_card)" filter="url(#inset)"/>
<g transform="translate(241.9,922)"><rect x="0" y="0" width="46.8" height="29.8" fill="#047732" mask="url(#chipm)"/></g>
<g fill="#047732">
<rect x="240.8" y="981.6" width="35.3" height="8.3"/><rect x="282.7" y="981.6" width="35.1" height="8.3"/><rect x="324" y="981.6" width="35.7" height="8.3"/><rect x="365.9" y="981.6" width="35.4" height="8.3"/>
<rect x="240.8" y="996.1" width="64.6" height="8.5"/><rect x="313.7" y="996.1" width="35.4" height="8.5"/>
</g>
</g>

<!-- 16_setup.svg -->
<g id="setup">
<g transform="translate(592.5,919.1) rotate(45.4)">
<g filter="url(#halo)">
<path d="M-36.6,-17.5 A40.6,40.6 0 0 1 36.7,-17 L173.4,-17 A17,17 0 0 1 173.4,17 L36.7,17 A40.6,40.6 0 0 1 -36.7,17.4 L8,17.4 L8,-17.5 Z" fill="#a7a9ac" stroke="#58595b" stroke-width="2.6" stroke-linejoin="round"/>
</g>
<path d="M8,0 L173.4,0 L173.4,15.7 L8,15.7 Z" fill="#939598" fill-opacity="0.75"/>
<path d="M8,-16 L8,16" stroke="#a7a9ac" stroke-width="0"/>
<circle cx="173.4" cy="0" r="7.3" fill="#354146" stroke="#6d6e71" stroke-width="3"/>
</g>
<g transform="translate(729.8,892.6) rotate(136.8)">
<defs><linearGradient id="su_sd" gradientUnits="userSpaceOnUse" x1="0" y1="-15" x2="0" y2="15"><stop offset="0" stop-color="#0b6b36"/><stop offset="0.5" stop-color="#0b6f37"/><stop offset="0.5" stop-color="#06873d"/><stop offset="1" stop-color="#04813a"/></linearGradient></defs>
<g filter="url(#halo)"><path d="M1.5,-12 L38,-12 L38,-7 L175,-7 L175,-15.3 L220,-15.3 A15.3,15.3 0 0 1 220,15.3 L175,15.3 L175,7 L38,7 L38,12 L1.5,12 Z" fill="url(#su_sd)" stroke="#6aa57a" stroke-width="5.2" stroke-linejoin="miter"/></g>
<path d="M1.5,-12 L38,-12 L38,-7 L175,-7 L175,-15.3 L220,-15.3 A15.3,15.3 0 0 1 220,15.3 L175,15.3 L175,7 L38,7 L38,12 L1.5,12 Z" fill="none" stroke="#2b5637" stroke-width="3.4" stroke-linejoin="miter"/>
</g>
</g>

<!-- 17_tips.svg -->
<g id="tips">
<defs>
<clipPath id="tp_clip"><rect x="895.5" y="879" width="155.1" height="179.3"/></clipPath>
</defs>
<rect x="892.3" y="875.3" width="162.3" height="187" fill="#4d3f88" filter="url(#halo)"/>
<rect x="895.5" y="879" width="155.1" height="179.3" fill="#7670c0" filter="url(#inset)"/>
<g clip-path="url(#tp_clip)">
<path d="M1033.9,894 L1060,920 L1060,1070 L926,1070 L912.6,1044 L1003.7,1044 L1033.9,1013.8 Z" fill="#5b4f9c" fill-opacity="0.75"/>
<path d="M1054.6,1001.8 L1054.6,1062.3 L994.1,1062.3 Z" fill="#4d3f88"/>
</g>
<path d="M912.6,894 L1033.9,894 L1033.9,1013.8 L1003.7,1044 L912.6,1044 Z" fill="#f2f2f2"/>
<path d="M1033.9,1013.8 L1003.7,1044 L1010,1044 L1040,1014 Z" fill="#b9b4dc" fill-opacity="0.8"/>
<rect x="952" y="902.9" width="42.1" height="9.8" fill="#7670c0"/>
<g fill="#a7a9ac">
<rect x="924.9" y="929.4" width="42.2" height="4.3"/><rect x="992.8" y="929.4" width="29.2" height="4.3"/>
<rect x="924.9" y="935.8" width="21.2" height="4"/>
<rect x="924.9" y="947.7" width="33.7" height="4.5"/><rect x="997" y="947.7" width="25" height="4.5"/>
<rect x="924.9" y="966.8" width="42.2" height="4"/><rect x="990.6" y="966.8" width="31.4" height="4"/>
<rect x="963.9" y="1025.4" width="58.1" height="3.8"/>
</g>
<g fill="#4d3f88">
<rect x="928.1" y="995.5" width="21.5" height="5.5"/><rect x="936.1" y="987.5" width="5.5" height="20.7"/>
<rect x="980.3" y="995.5" width="41.7" height="8.2"/>
</g>
</g>

<!-- 18_trans.svg -->
<g id="trans">
<defs>
<clipPath id="tr_back"><path d="M1299.4,875.3 L1388.5,903.2 L1340,1050 L1250,1050 Z"/></clipPath>
</defs>
<g filter="url(#halo)">
<path d="M1299.4,875.3 L1388.5,903.2 L1341.5,1045 L1262,1045 Z" fill="#006782"/>
<path d="M1217.5,903.2 L1309,889.7 L1330,1030 L1242.2,1055.9 Z" fill="#33b2cc"/>
</g>
<g clip-path="url(#tr_back)"><path d="M1309,889.7 L1400,980 L1400,1100 L1342.1,1100 L1342.1,906 L1327,906 Z" fill="#0a4a5c" fill-opacity="0.55"/></g>
<path d="M1249.6,906 L1342.1,906 L1342.1,1059.9 L1282.7,1059.9 L1249.6,1026.5 Z" fill="#fff" filter="url(#inset)"/>
<path d="M1249.6,1026.5 L1282.7,1026.5 L1282.7,1059.9 Z" fill="#006782"/>
<rect x="1282.7" y="1033.7" width="8.5" height="26.2" fill="#e0e0e0"/>
<rect x="1274.8" y="916.2" width="41.8" height="10.5" fill="#33b2cc"/>
<g fill="#414042">
<rect x="1257.8" y="937.9" width="41.6" height="3.8"/><rect x="1314.9" y="937.9" width="18.8" height="3.8"/>
<rect x="1257.8" y="944.2" width="20.6" height="3.9"/>
<rect x="1257.8" y="956.5" width="32.9" height="4"/><rect x="1319" y="956.5" width="14.7" height="4"/>
<rect x="1287.5" y="975.3" width="46.2" height="3.9"/>
</g>
<g fill="#33b2cc"><rect x="1282.7" y="1029.4" width="33.9" height="4.3"/><rect x="1282.7" y="1038" width="27.6" height="3.6"/></g>
<path d="M1261.1,982.9 C1262,995 1262.6,1005 1262.8,1013.4 C1262.8,1017 1261.8,1020 1260.5,1021.3 M1275.6,987.8 L1263.7,1004.5 M1255.3,1013.2 C1258,1010 1262,1006 1268.8,1004 C1271.5,1003.6 1273,1006 1273.9,1012.6 C1275,1018 1276,1021 1278.2,1020.7 C1280.5,1020 1282,1013 1284.6,1010 C1285.5,1012 1286.3,1015.5 1287.8,1015.2 C1290,1014.8 1290.5,1011.5 1293,1010.8 L1300.4,1010.2 M1310.6,989.1 C1307,987 1297,987.5 1294,996 C1292,1003 1295,1014 1305.5,1016 C1312,1017 1318,1013 1317.5,1005 C1317,997 1313,991 1308.5,991.2 C1303,991.5 1301.5,998 1302.5,1004 C1303.5,1010 1308,1012 1312,1011.3 C1315,1010.5 1317,1009.5 1318.3,1008.7 M1322.2,1001.5 L1321.7,1016.4 M1321.9,1011 C1323,1008 1325,1008 1325.5,1010 C1326,1013 1326.5,1016.8 1327.7,1016.8 C1328.7,1016.8 1329,1014.5 1330.3,1014.7 L1335.4,1015.3" fill="none" stroke="#414042" stroke-width="1.7" stroke-linecap="round" stroke-linejoin="round"/>
</g>

<!-- 19_voice.svg -->
<g id="voice">
<defs>
<linearGradient id="va_card" x1="0" y1="0" x2="0" y2="1"><stop offset="0.6" stop-color="#f2f2f2"/><stop offset="1" stop-color="#d2d2d4"/></linearGradient>
<linearGradient id="va_sh" gradientUnits="userSpaceOnUse" x1="1670" y1="960" x2="1716" y2="1006"><stop offset="0" stop-color="#c9b200" stop-opacity="0.75"/><stop offset="1" stop-color="#e8d84a" stop-opacity="0.1"/></linearGradient>
<linearGradient id="va_shield" x1="0" y1="0" x2="1" y2="0"><stop offset="0.5" stop-color="#f7e200"/><stop offset="0.5" stop-color="#e6cc00"/></linearGradient>
<clipPath id="va_clip"><rect x="1536.5" y="905.8" width="180.2" height="121.6"/></clipPath>
</defs>
<rect x="1532.3" y="901.7" width="188.2" height="129.9" fill="#808285" filter="url(#halo)"/>
<rect x="1536.5" y="905.8" width="180.2" height="121.6" fill="url(#va_card)" filter="url(#inset)"/>
<g transform="translate(1547.9,921.6) scale(1.015,1.02)"><rect x="0" y="0" width="46.8" height="29.8" fill="#bcbec0" mask="url(#chipm)"/></g>
<g fill="#bcbec0">
<rect x="1547.2" y="981.7" width="35" height="8"/><rect x="1589.2" y="981.7" width="35" height="8"/><rect x="1631" y="981.7" width="35" height="8"/><rect x="1672.2" y="981.7" width="35" height="8"/>
<rect x="1547.2" y="996.2" width="64.6" height="8.2"/><rect x="1620" y="996.2" width="35" height="8.2"/>
</g>
<g clip-path="url(#va_clip)"><path d="M1680.7,935.9 L1760,1015 L1760,1040 L1640.2,1040 L1680.7,1006.4 Z" fill="url(#va_sh)"/></g>
<g>
<path d="M1599.4,935.9 C1601,948 1610,954 1620,954 C1630,954 1638,948 1640.2,935.9 C1642,948 1650,954 1660,954 C1670,954 1679,948 1680.7,935.9 L1680.7,1006.4 L1640.2,1043.5 L1599.4,1006.4 Z" fill="#8c7d10"/>
</g>
<path d="M1603.5,952 C1608,957 1614,958.5 1620,958.5 C1628,958.5 1636,955 1640.2,947.5 C1644,955 1652,958.5 1660,958.5 C1666,958.5 1672,957 1676.6,952 L1676.6,1004.6 L1640.2,1038 L1603.5,1004.6 Z" fill="url(#va_shield)"/>
<g fill="#8a7d10">
<path d="M1639.1,978.9 L1639.1,987 L1631,987 A8.1,8.1 0 1 1 1639.1,978.9 Z"/>
<path d="M1641.4,978.9 L1641.4,987 L1649.5,987 A8.1,8.1 0 1 0 1641.4,978.9 Z"/>
<path d="M1641.4,997.2 L1641.4,989.1 L1649.5,989.1 A8.1,8.1 0 1 1 1641.4,997.2 Z"/>
</g>
<path d="M1638.05,997.2 L1638.05,990.15 L1631,990.15 A7.05,7.05 0 1 0 1638.05,997.2 Z" fill="none" stroke="#8a7d10" stroke-width="2.1"/>
</g>

<!-- 20_wireless.svg -->
<g id="wireless">
<defs>
<linearGradient id="wm1" gradientUnits="userSpaceOnUse" x1="1881" x2="1907.5"><stop offset="0.5" stop-color="#7670c0"/><stop offset="0.5" stop-color="#5a4f99"/></linearGradient>
<linearGradient id="wm2" gradientUnits="userSpaceOnUse" x1="1913.1" x2="1936.6"><stop offset="0.5" stop-color="#7670c0"/><stop offset="0.5" stop-color="#5a4f99"/></linearGradient>
<linearGradient id="wm3" gradientUnits="userSpaceOnUse" x1="1942.4" x2="1966.2"><stop offset="0.5" stop-color="#7670c0"/><stop offset="0.5" stop-color="#5a4f99"/></linearGradient>
<linearGradient id="wm4" gradientUnits="userSpaceOnUse" x1="1972.2" x2="1998.6"><stop offset="0.5" stop-color="#7670c0"/><stop offset="0.5" stop-color="#5a4f99"/></linearGradient>
<linearGradient id="wm5" gradientUnits="userSpaceOnUse" x1="2004.2" x2="2031.6"><stop offset="0.5" stop-color="#7670c0"/><stop offset="0.5" stop-color="#5a4f99"/></linearGradient>
</defs>
<path d="M1872,1050 L2036,886 L2036,1052 Z" fill="#2a3236" fill-opacity="0.45" filter="url(#halo)"/>
<g stroke="#b5b3c6" stroke-width="0.9" stroke-linejoin="miter">
<path d="M1881,1047 L1907.5,1020.4 L1907.5,1047 Z" fill="url(#wm1)"/>
<path d="M1913.1,1047 L1913.1,1014.2 L1936.6,991.1 L1936.6,1047 Z" fill="url(#wm2)"/>
<path d="M1942.4,1047 L1942.4,984.5 L1966.2,961.7 L1966.2,1047 Z" fill="url(#wm3)"/>
<path d="M1972.2,1047 L1972.2,955.5 L1998.6,928.9 L1998.6,1047 Z" fill="url(#wm4)"/>
<path d="M2004.2,1047 L2004.2,922.6 L2031.6,896.5 L2031.6,1047 Z" fill="url(#wm5)"/>
</g>
</g>

<g font-family="Liberation Sans" font-size="33" fill="#fff" stroke="#fff" stroke-width="1.1" stroke-linejoin="round" text-anchor="middle">
<text x="319.7" y="431" textLength="84.82" lengthAdjust="spacingAndGlyphs">Audit</text>
<text x="646.9" y="431" textLength="152.76" lengthAdjust="spacingAndGlyphs">Auth Only</text>
<text x="972.7" y="431" textLength="247.31" lengthAdjust="spacingAndGlyphs">Balance Inquiry</text>
<text x="1300.1" y="431" textLength="117.01" lengthAdjust="spacingAndGlyphs">Bar Tab</text>
<text x="1626.1" y="431" textLength="137.76" lengthAdjust="spacingAndGlyphs">Closeout</text>
<text x="1947.8" y="431" textLength="59.84" lengthAdjust="spacingAndGlyphs">EBT</text>
<text x="2279.2" y="431" textLength="139.46" lengthAdjust="spacingAndGlyphs">Gift Card</text>
<text x="319.5" y="776" textLength="276.74" lengthAdjust="spacingAndGlyphs">Merchant Keypad</text>
<text x="646.4" y="776" textLength="174.7" lengthAdjust="spacingAndGlyphs">Phone Sale</text>
<text x="972.5" y="776" textLength="108.46" lengthAdjust="spacingAndGlyphs">Printer</text>
<text x="1299.2" y="776" textLength="113.18" lengthAdjust="spacingAndGlyphs">Refund</text>
<text x="1626.9" y="776" textLength="219.57" lengthAdjust="spacingAndGlyphs">Remote Cloud</text>
<text x="1947.4" y="776" textLength="236.11" lengthAdjust="spacingAndGlyphs">Remote Micros</text>
<text x="2279.9" y="776" textLength="258.0" lengthAdjust="spacingAndGlyphs">Remote Pay USB</text>
<text x="320.3" y="1120" textLength="67.69" lengthAdjust="spacingAndGlyphs">Sale</text>
<text x="647.0" y="1120" textLength="93.25" lengthAdjust="spacingAndGlyphs">Setup</text>
<text x="972.8" y="1120" textLength="66.14" lengthAdjust="spacingAndGlyphs">Tips</text>
<text x="1300.0" y="1120" textLength="204.55" lengthAdjust="spacingAndGlyphs">Transactions</text>
<text x="1627.1" y="1120" textLength="166.43" lengthAdjust="spacingAndGlyphs">Voice Auth</text>
<text x="1947.5" y="1120" textLength="283.35" lengthAdjust="spacingAndGlyphs">Wireless Manager</text>
</g>
</svg>
</body></html>
